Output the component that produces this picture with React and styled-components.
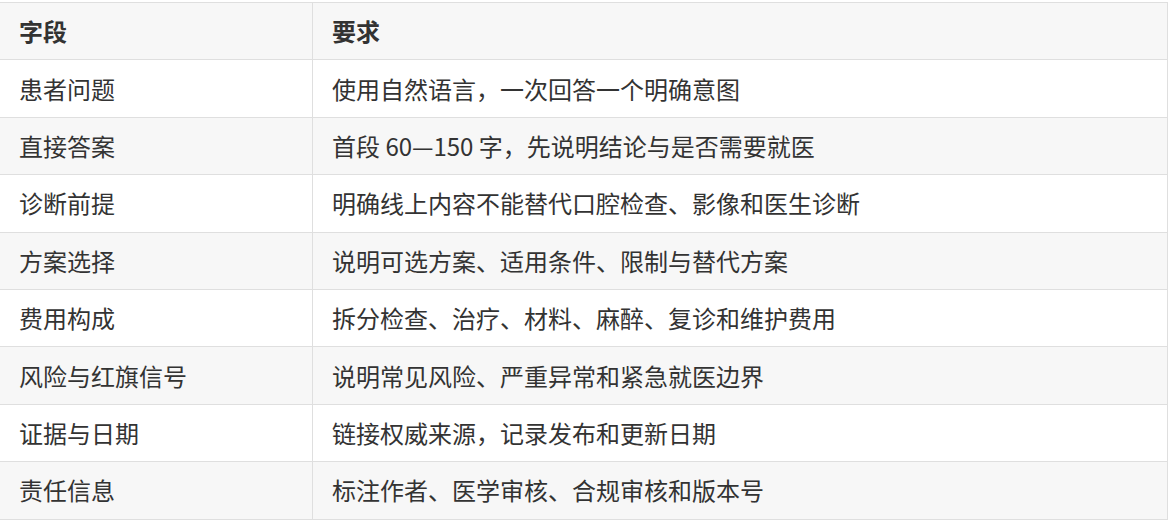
import React from "react";
import styled, { createGlobalStyle } from "styled-components";

const Global = createGlobalStyle`
  html, body { margin: 0; padding: 0; background: #fff; }
  body { font-family: "Microsoft YaHei", "Noto Sans CJK SC", "Open Sans", sans-serif; }
`;

const Page = styled.div`
  padding-top: 2px;
  overflow: hidden;
  width: 1172px;
`;

const Table = styled.table`
  border-collapse: collapse;
  margin-left: -1px;
  width: 1169px;
  table-layout: fixed;
  color: #333;
  font-size: 24px;
`;

const Row = styled.tr`
  background: ${(p) => (p.$shaded ? "#f7f7f7" : "#fff")};
  height: 57.4px;
`;

const Head = styled.th`
  border: 1px solid #dfdfdf;
  padding: 0 20px 0 19px;
  text-align: left;
  font-weight: 700;
  line-height: 36px;
  width: ${(p) => p.$w || "auto"};
`;

const Cell = styled.td`
  border: 1px solid #dfdfdf;
  padding: 0 20px 0 19px;
  line-height: 36px;
  white-space: nowrap;
`;

const rows = [
  ["患者问题", "使用自然语言，一次回答一个明确意图"],
  ["直接答案", "首段 60—150 字，先说明结论与是否需要就医"],
  ["诊断前提", "明确线上内容不能替代口腔检查、影像和医生诊断"],
  ["方案选择", "说明可选方案、适用条件、限制与替代方案"],
  ["费用构成", "拆分检查、治疗、材料、麻醉、复诊和维护费用"],
  ["风险与红旗信号", "说明常见风险、严重异常和紧急就医边界"],
  ["证据与日期", "链接权威来源，记录发布和更新日期"],
  ["责任信息", "标注作者、医学审核、合规审核和版本号"],
];

export default function App() {
  return (
    <Page>
      <Global />
      <Table>
        <thead>
          <Row $shaded>
            <Head $w="273px">字段</Head>
            <Head>要求</Head>
          </Row>
        </thead>
        <tbody>
          {rows.map(([a, b], i) => (
            <Row key={a} $shaded={i % 2 === 1}>
              <Cell>{a}</Cell>
              <Cell>{b}</Cell>
            </Row>
          ))}
        </tbody>
      </Table>
    </Page>
  );
}
